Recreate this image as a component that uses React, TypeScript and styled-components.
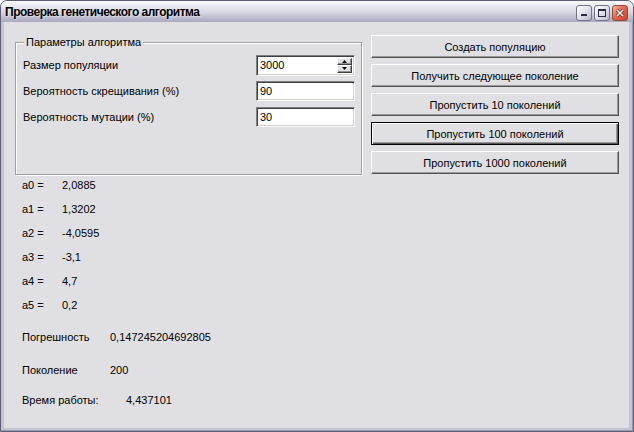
import React from "react"
import styled, { createGlobalStyle } from "styled-components"

const GlobalStyle = createGlobalStyle`
  html, body {
    margin: 0;
    padding: 0;
    background: #ffffff;
  }
  body {
    font-family: "Liberation Sans", Arial, sans-serif;
    font-size: 11px;
    color: #000;
  }
`

const Window = styled.div`
  width: 634px;
  height: 432px;
  box-sizing: border-box;
  display: flex;
  flex-direction: column;
  border: 1px solid #5e5e78;
  border-radius: 7px 7px 0 0;
  overflow: hidden;
  background: #c4c4d4;
`

const TitleBar = styled.div`
  height: 21px;
  flex: none;
  display: flex;
  align-items: center;
  padding: 0 5px 0 4px;
  background: linear-gradient(
    to bottom,
    #fbfbfd 0%,
    #e9e9f0 25%,
    #d6d6e2 55%,
    #bcbccf 80%,
    #a9a9bf 100%
  );
`

const Title = styled.div`
  flex: 1;
  font-family: "Liberation Sans", Arial, sans-serif;
  font-weight: bold;
  font-size: 12px;
  letter-spacing: -0.5px;
  color: #000;
  white-space: nowrap;
  text-shadow: 1px 1px 0 rgba(255, 255, 255, 0.4);
`

const CaptionButtons = styled.div`
  display: flex;
  gap: 2px;
  margin-top: 2px;
`

const CaptionButton = styled.div<{ $close?: boolean }>`
  width: 16px;
  height: 16px;
  box-sizing: border-box;
  border: 1px solid ${(p) => (p.$close ? "#9b4336" : "#72728e")};
  border-radius: 3px;
  background: ${(p) =>
    p.$close
      ? "linear-gradient(135deg, #f7b9a6 0%, #e06a52 45%, #c94331 100%)"
      : "linear-gradient(135deg, #ffffff 0%, #e4e4ee 45%, #b9b9cd 100%)"};
  display: flex;
  align-items: center;
  justify-content: center;
`

const Frame = styled.div`
  flex: 1;
  display: flex;
  padding: 0 4px 3px 3px;
  background: #c4c4d4;
  box-shadow: inset -1px -1px 0 #9a9ab2;
`

const Client = styled.div`
  flex: 1;
  background: #e0dfe3;
  display: flex;
  flex-direction: column;
`

const TopRow = styled.div`
  display: flex;
  align-items: flex-start;
  gap: 9px;
  padding: 13px 10px 0 11px;
`

const GroupBox = styled.div`
  position: relative;
  width: 347px;
  height: 133px;
  margin-top: 7px;
  box-sizing: border-box;
  border: 1px solid #a0a0a4;
  box-shadow: inset 1px 1px 0 #ffffff, 1px 1px 0 #ffffff;
  padding: 12px 6px 0 7px;
  display: flex;
  flex-direction: column;
  gap: 6px;
`

const GroupCaption = styled.span`
  position: absolute;
  top: -7px;
  left: 8px;
  padding: 0 2px;
  line-height: 13px;
  background: #e0dfe3;
`

const FieldRow = styled.div`
  height: 20px;
  display: flex;
  align-items: center;
  justify-content: space-between;
`

const sunken = `
  box-sizing: border-box;
  border: 1px solid;
  border-color: #808080 #ffffff #ffffff #808080;
  box-shadow: inset 1px 1px 0 #404040, inset -1px -1px 0 #d4d0c8;
  background: #ffffff;
`

const TextInput = styled.input`
  ${sunken}
  width: 99px;
  height: 20px;
  margin: 0;
  padding: 0 0 0 3px;
  font-family: "Liberation Sans", Arial, sans-serif;
  font-size: 11px;
  color: #000;
  outline: none;
`

const SpinBox = styled.div`
  ${sunken}
  width: 99px;
  height: 21px;
  display: flex;
  align-items: stretch;
  padding: 2px 2px 2px 0;
`

const SpinField = styled.input`
  flex: 1;
  min-width: 0;
  border: none;
  margin: 0;
  padding: 0 0 0 3px;
  background: transparent;
  font-family: "Liberation Sans", Arial, sans-serif;
  font-size: 11px;
  color: #000;
  outline: none;
`

const SpinButtons = styled.div`
  width: 15px;
  display: flex;
  flex-direction: column;
`

const SpinButton = styled.div`
  flex: 1;
  box-sizing: border-box;
  background: #e0dfe3;
  border: 1px solid;
  border-color: #ffffff #404040 #404040 #ffffff;
  box-shadow: inset -1px -1px 0 #909090;
  display: flex;
  align-items: center;
  justify-content: center;
`

const ButtonColumn = styled.div`
  width: 248px;
  display: flex;
  flex-direction: column;
  gap: 6px;
`

const PushButton = styled.button<{ $default?: boolean }>`
  height: 23px;
  margin: 0;
  padding: 0;
  box-sizing: border-box;
  background: #e0dfe3;
  font-family: "Liberation Sans", Arial, sans-serif;
  font-size: 11px;
  color: #000;
  cursor: default;
  border: 1px solid;
  border-color: ${(p) =>
    p.$default ? "#000000" : "#ffffff #555555 #555555 #ffffff"};
  box-shadow: ${(p) =>
    p.$default
      ? "inset 1px 1px 0 #ffffff, inset -1px -1px 0 #555555, inset -2px -2px 0 #999999"
      : "inset -1px -1px 0 #999999"};
`

const Results = styled.div`
  display: flex;
  flex-direction: column;
  padding: 4px 0 0 18px;
`

const CoefList = styled.div`
  display: flex;
  flex-direction: column;
  gap: 11px;
`

const ValueRow = styled.div<{ $label: number; $top?: number }>`
  display: grid;
  grid-template-columns: ${(p) => p.$label}px auto;
  line-height: 13px;
  height: 13px;
  margin-top: ${(p) => p.$top ?? 0}px;
  white-space: nowrap;
`

const Arrow = ({ up }: { up?: boolean }) => (
  <svg width="5" height="3" viewBox="0 0 5 3">
    <path d={up ? "M2.5 0 L5 3 L0 3 Z" : "M0 0 L5 0 L2.5 3 Z"} fill="#000" />
  </svg>
)

const coefficients = [
  ["a0 =", "2,0885"],
  ["a1 =", "1,3202"],
  ["a2 =", "-4,0595"],
  ["a3 =", "-3,1"],
  ["a4 =", "4,7"],
  ["a5 =", "0,2"],
]

const actions = [
  "Создать популяцию",
  "Получить следующее поколение",
  "Пропустить 10 поколений",
  "Пропустить 100 поколений",
  "Пропустить 1000 поколений",
]

export default function App() {
  return (
    <>
      <GlobalStyle />
      <Window>
        <TitleBar>
          <Title>Проверка генетического алгоритма</Title>
          <CaptionButtons>
            <CaptionButton>
              <svg width="10" height="10" viewBox="0 0 10 10">
                <rect x="2" y="6" width="6" height="2" fill="#2a2a40" />
              </svg>
            </CaptionButton>
            <CaptionButton>
              <svg width="10" height="10" viewBox="0 0 10 10">
                <rect x="1.5" y="1.5" width="7" height="7" fill="none" stroke="#2a2a40" strokeWidth="1" />
                <rect x="1" y="1" width="8" height="2" fill="#2a2a40" />
              </svg>
            </CaptionButton>
            <CaptionButton $close>
              <svg width="10" height="10" viewBox="0 0 10 10">
                <path d="M2 2 L8 8 M8 2 L2 8" stroke="#6a2018" strokeWidth="3" />
                <path d="M2 2 L8 8 M8 2 L2 8" stroke="#ffffff" strokeWidth="1.6" />
              </svg>
            </CaptionButton>
          </CaptionButtons>
        </TitleBar>
        <Frame>
          <Client>
            <TopRow>
              <GroupBox>
                <GroupCaption>Параметры алгоритма</GroupCaption>
                <FieldRow>
                  <span>Размер популяции</span>
                  <SpinBox>
                    <SpinField defaultValue="3000" />
                    <SpinButtons>
                      <SpinButton><Arrow up /></SpinButton>
                      <SpinButton><Arrow /></SpinButton>
                    </SpinButtons>
                  </SpinBox>
                </FieldRow>
                <FieldRow>
                  <span>Вероятность скрещивания (%)</span>
                  <TextInput defaultValue="90" />
                </FieldRow>
                <FieldRow>
                  <span>Вероятность мутации (%)</span>
                  <TextInput defaultValue="30" />
                </FieldRow>
              </GroupBox>
              <ButtonColumn>
                {actions.map((a, i) => (
                  <PushButton key={a} $default={i === 3}>
                    {a}
                  </PushButton>
                ))}
              </ButtonColumn>
            </TopRow>
            <Results>
              <CoefList>
                {coefficients.map(([k, v]) => (
                  <ValueRow key={k} $label={40}>
                    <span>{k}</span>
                    <span>{v}</span>
                  </ValueRow>
                ))}
              </CoefList>
              <ValueRow $label={88} $top={19}>
                <span>Погрешность</span>
                <span>0,147245204692805</span>
              </ValueRow>
              <ValueRow $label={88} $top={20}>
                <span>Поколение</span>
                <span>200</span>
              </ValueRow>
              <ValueRow $label={104} $top={17}>
                <span>Время работы:</span>
                <span>4,437101</span>
              </ValueRow>
            </Results>
          </Client>
        </Frame>
      </Window>
    </>
  )
}
